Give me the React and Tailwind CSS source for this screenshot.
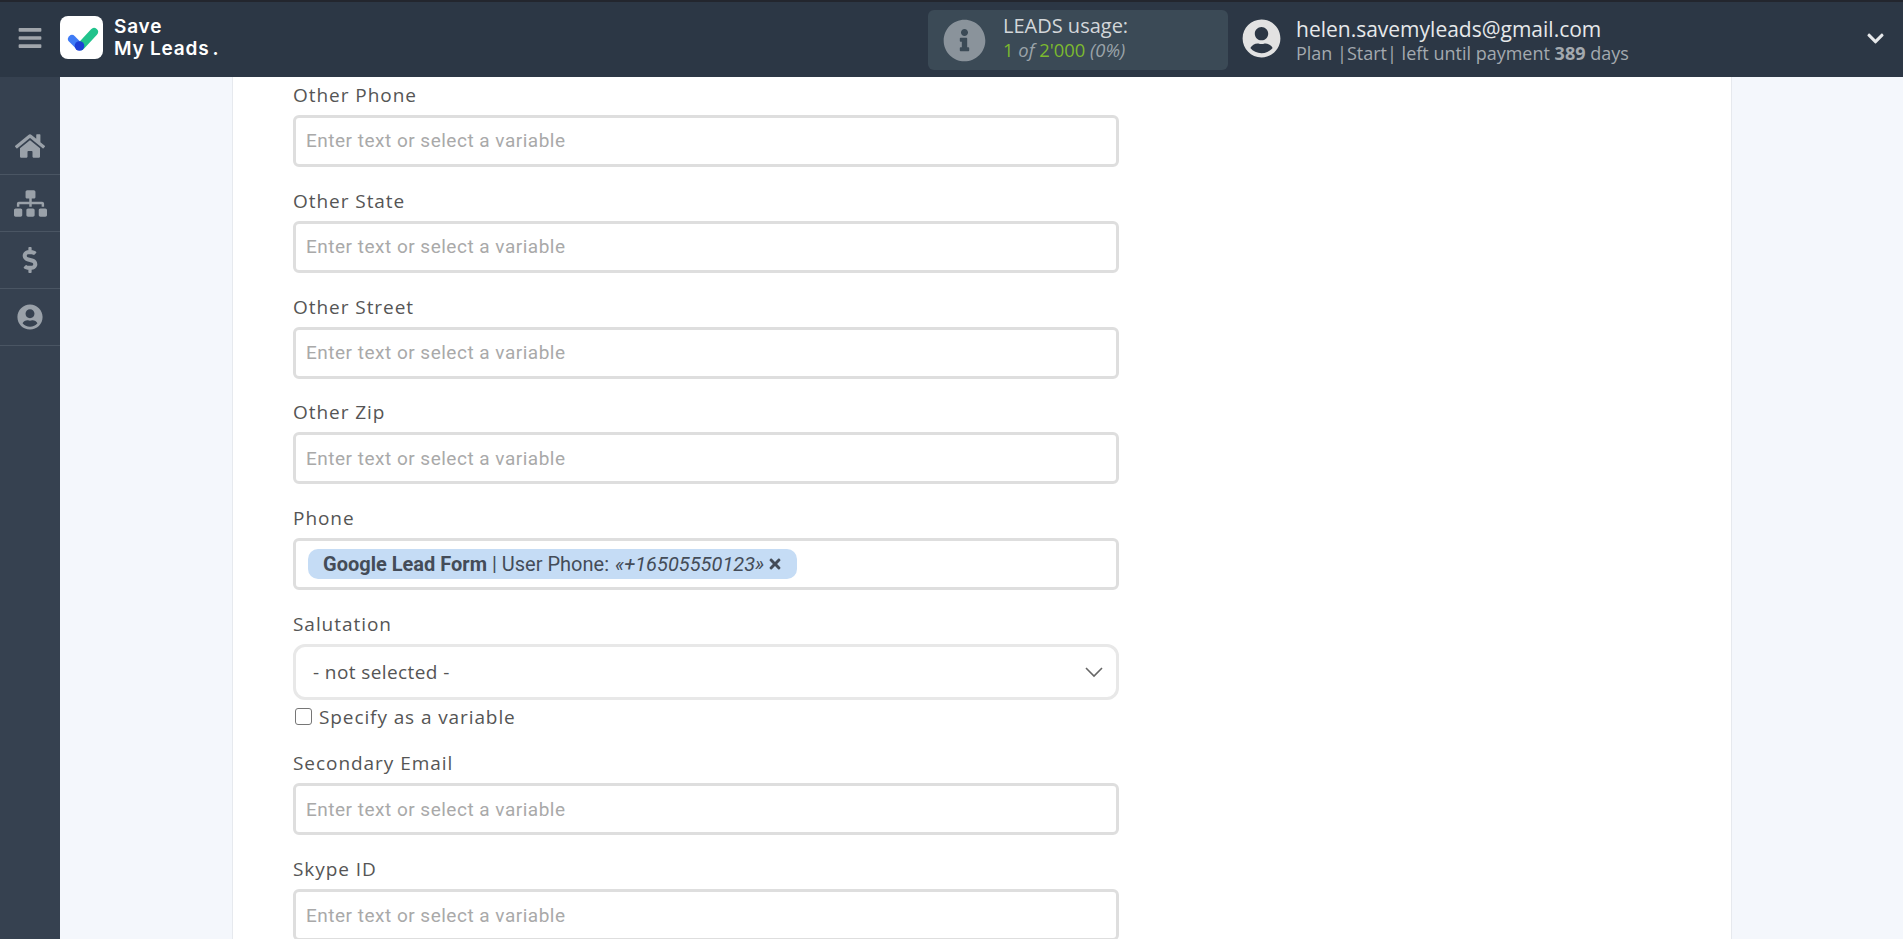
import React from "react";
import { FaHome, FaSitemap, FaDollarSign, FaUserCircle, FaInfoCircle, FaBars, FaChevronDown, FaTimes } from "react-icons/fa";

const labelClass = "block h-6 mb-[10px] text-[19px] leading-[29px] tracking-[0.95px] text-[#555] font-['Open_Sans',sans-serif] font-medium";

function TextField({ label, children }) {
  return (
    <div className="mb-[19.8px]">
      <div className={labelClass}>{label}</div>
      <div className="h-[52px] w-[826px] border-[3px] border-[#dedede] rounded-[6px] bg-white flex items-center pl-[10px] pt-[1px] text-[19px] text-[#a9a9a9] font-['Roboto',sans-serif] tracking-[0.5px]">
        {children || "Enter text or select a variable"}
      </div>
    </div>
  );
}

function Logo() {
  return (
    <div className="w-[43px] h-[43px] mt-[-4px] bg-white rounded-[8px] flex items-center justify-center shrink-0">
      <svg width="43" height="43" viewBox="0 0 43 43">
        <line x1="12" y1="23" x2="19" y2="30" stroke="#3f7bf6" strokeWidth="8" strokeLinecap="round" />
        <line x1="21" y1="30" x2="34" y2="16" stroke="#21c38c" strokeWidth="8" strokeLinecap="round" />
        <circle cx="19.5" cy="30" r="4.8" fill="#1d3fd6" />
      </svg>
    </div>
  );
}

function SideItem({ children }) {
  return (
    <div className="h-[57px] flex items-center justify-center border-b border-[#4a5563] text-[#9aa1a9]">
      {children}
    </div>
  );
}

export default function App() {
  return (
    <div className="w-[1903px] h-[939px] overflow-hidden flex flex-col bg-[#f4f7fc]">
      <header className="h-[77px] shrink-0 bg-[#2c3745] border-t-2 border-[#23262e] flex items-center">
        <div className="w-[60px] flex justify-center text-[#a0a5ab] mt-[-3px]">
          <FaBars size={26} />
        </div>
        <Logo />
        <div className="ml-[11px] mt-[-3px] text-white font-['Inter',sans-serif] font-semibold text-[19px] leading-[22px] tracking-[0.8px]">
          <div>Save</div>
          <div>My Leads<span className="ml-[3px]">.</span></div>
        </div>
        <div className="ml-auto mr-[16px] w-[300px] h-[60px] bg-[#3b4a56] rounded-[6px] flex items-center pl-[15px] mt-[1px]">
          <FaInfoCircle size={43} className="text-[#8a939b]" />
          <div className="ml-[17px] mt-[-4px] font-['Open_Sans',sans-serif] text-[#d3d7da]">
            <div className="text-[20px] leading-[24px]">LEADS usage:</div>
            <div className="text-[18.4px] leading-[24px] italic text-[#9aa3a9]">
              <span className="text-[#7cb92f] not-italic">1</span> of <span className="text-[#7cb92f] not-italic">2'000</span> (0%)
            </div>
          </div>
        </div>
        <div className="w-[661px] ml-[-2px] flex items-center mt-[-3px]">
          <FaUserCircle size={39} className="text-[#e2e2e2]" />
          <div className="ml-[15px] mt-[2px] font-['Open_Sans',sans-serif]">
            <div className="text-[21px] leading-[28px] text-[#e6e8ea]">helen.savemyleads@gmail.com</div>
            <div className="text-[18px] leading-[20px] text-[#a3a9af]">
              Plan |Start| left until payment <b className="font-bold">389</b> days
            </div>
          </div>
          <FaChevronDown size={19} className="ml-auto mr-[18px] text-[#e6e8ea]" />
        </div>
      </header>
      <div className="flex-1 flex min-h-0">
        <aside className="w-[60px] shrink-0 bg-[#364150] pt-[41px]">
          <SideItem><FaHome size={30} /></SideItem>
          <SideItem><FaSitemap size={33} /></SideItem>
          <SideItem><FaDollarSign size={26} /></SideItem>
          <SideItem><FaUserCircle size={26} /></SideItem>
        </aside>
        <div className="ml-[172px] w-[1500px] bg-white border-x border-[#e6e9ee] pl-[60px] pt-[4px] overflow-hidden">
          <TextField label="Other Phone" />
          <TextField label="Other State" />
          <TextField label="Other Street" />
          <TextField label="Other Zip" />
          <TextField label="Phone">
            <div className="ml-[2px] mt-[-1px] h-[30px] pl-[15px] pr-[14px] rounded-[10px] bg-[#c5dcf5] flex items-center text-[#444c58] text-[20px] tracking-normal whitespace-nowrap">
              <b className="font-bold">Google Lead Form</b>
              <span className="ml-[5px]">| User Phone:</span>
              <i className="ml-[6px]">«+16505550123»</i>
              <FaTimes size={16} className="ml-[3px]" />
            </div>
          </TextField>
          <div className={labelClass}>Salutation</div>
          <div className="h-[56px] w-[826px] border-[3px] border-[#e8e8e8] rounded-[12px] flex items-center justify-between pl-[17px] pr-[12px] text-[19px] tracking-[0.4px] text-[#555] font-['Open_Sans',sans-serif]">
            <span>- not selected -</span>
            <svg width="20" height="12" viewBox="0 0 20 12" fill="none" stroke="#666" strokeWidth="1.6"><path d="M2 2l8 8 8-8" /></svg>
          </div>
          <label className="flex items-center h-[24px] mt-[5px] mb-[20.5px] text-[19px] tracking-[0.9px] text-[#555] font-['Open_Sans',sans-serif] font-medium">
            <span className="ml-[2px] w-[17px] h-[17px] border-[1.5px] border-[#767676] rounded-[3px] bg-white" />
            <span className="ml-[7px]">Specify as a variable</span>
          </label>
          <TextField label="Secondary Email" />
          <TextField label="Skype ID" />
        </div>
      </div>
    </div>
  );
}
